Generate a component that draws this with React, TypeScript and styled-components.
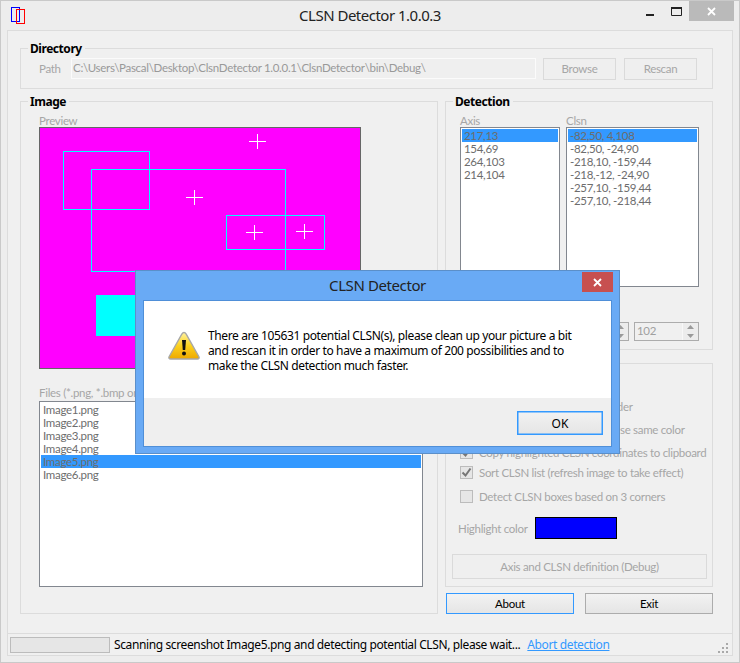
import React from "react"
import styled, { createGlobalStyle } from "styled-components"

const GlobalStyle = createGlobalStyle`
    html, body {
        margin: 0;
        padding: 0;
        background: #ededed;
    }
    * {
        box-sizing: border-box;
    }
`
const Window = styled.div`
    position: relative;
    width: 740px;
    height: 663px;
    background: #ededed;
    border: 1px solid #c9c9c9;
    font-family: "Lato", "Noto Sans", sans-serif;
    font-size: 11.5px;
    letter-spacing: -0.3px;
    overflow: hidden;
`
const TitleBar = styled.header`
    height: 29px;
    display: grid;
    grid-template-columns: 1fr auto 1fr;
`
const AppIcon = styled.svg`
    margin: 6px 0 0 10px;
`
const TitleText = styled.h1`
    margin: 0;
    font-family: "Noto Sans", sans-serif;
    font-size: 15px;
    font-weight: 400;
    line-height: 29px;
    color: #222;
    letter-spacing: -0.5px;
`
const WindowButtons = styled.div`
    display: flex;
    justify-content: flex-end;
    align-items: flex-start;
    padding-right: 5px;
`
const WindowButton = styled.div<{ $close?: boolean }>`
    width: ${p => (p.$close ? 45 : 26)}px;
    height: 20px;
    background: ${p => (p.$close ? "#bababa" : "transparent")};
    display: flex;
    align-items: center;
    justify-content: center;
`
const Client = styled.div`
    margin: 0 6px 0 6px;
    height: 626px;
    background: #f0f0f0;
    border: 1px solid #dcdcdc;
    display: flex;
    flex-direction: column;
`
const Content = styled.div`
    height: 602px;
    padding: 17px 19px 0 12px;
    display: flex;
    flex-direction: column;
    gap: 12px;
`
const Group = styled.section<{ $h: number }>`
    position: relative;
    height: ${p => p.$h}px;
    border: 1px solid #dcdcdc;
`
const Legend = styled.h2`
    position: absolute;
    top: -8px;
    left: 7px;
    margin: 0;
    padding: 0 3px 0 2px;
    background: #f0f0f0;
    color: #000;
    font-family: "Noto Sans", sans-serif;
    font-size: 12px;
    letter-spacing: -0.45px;
    line-height: 15px;
    font-weight: 700;
`
const DirectoryRow = styled.div`
    display: flex;
    align-items: center;
    height: 100%;
    padding: 0 0 0 18px;
`
const MutedLabel = styled.label`
    display: block;
    color: #a6a6a6;
    line-height: 13px;
    white-space: nowrap;
`
const PathLabel = styled(MutedLabel)`
    width: 32px;
`
const PathInput = styled.div`
    width: 465px;
    height: 21px;
    padding-left: 1px;
    line-height: 18px;
    color: #999;
    background: #efefef;
    border: 1px solid #fbfbfb;
    white-space: nowrap;
`
const FlatButton = styled.button<{ $ml?: number; $w: number; $h?: number }>`
    width: ${p => p.$w}px;
    height: ${p => p.$h ?? 22}px;
    margin-left: ${p => p.$ml ?? 0}px;
    padding: 0;
    color: #a6a6a6;
    background: #efefef;
    border: 1px solid #dadada;
    font: inherit;
    letter-spacing: inherit;
`
const Columns = styled.div`
    display: flex;
    gap: 7px;
`
const ImageColumn = styled.div`
    width: 418px;
`
const ImageBody = styled.div`
    padding: 12px 0 0 18px;
`
const PreviewBox = styled.div`
    position: relative;
    width: 322px;
    height: 242px;
    background: #ff00ff;
    border: 1px solid #666;
`
const FilesLabel = styled(MutedLabel)`
    margin: 17px 0 2px;
`
const ListBox = styled.ul<{ $w: number; $h: number }>`
    width: ${p => p.$w}px;
    height: ${p => p.$h}px;
    margin: 0;
    padding: 1px;
    list-style: none;
    background: #fff;
    border: 1px solid #82878f;
    overflow: hidden;
`
const ListItem = styled.li<{ $selected?: boolean }>`
    height: 13px;
    line-height: 13px;
    padding-left: 2px;
    color: #6d6d6d;
    background: ${p => (p.$selected ? "#3399ff" : "transparent")};
    white-space: nowrap;
`
const RightColumn = styled.div`
    width: 268px;
    display: flex;
    flex-direction: column;
`
const DetectionBody = styled.div`
    padding: 12px 0 0 14px;
`
const ListsRow = styled.div`
    display: flex;
    gap: 6px;
`
const SpinnerRow = styled.div`
    display: flex;
    justify-content: flex-end;
    gap: 5px;
    margin: 35px 13px 0 0;
`
const Spinner = styled.div`
    width: 65px;
    height: 19px;
    display: flex;
    justify-content: space-between;
    padding-left: 2px;
    line-height: 16px;
    color: #a0a0a0;
    border: 1px solid #acacac;
`
const SpinnerArrows = styled.div`
    width: 16px;
    display: flex;
    flex-direction: column;
    align-items: center;
    justify-content: space-around;
    background: #ececec;
    border-left: 1px solid #f8f8f8;
`
const OptionsGroup = styled(Group)`
    margin-top: 13px;
    padding: 35px 0 0 14px;
`
const CheckRow = styled.div<{ $gap: number }>`
    display: flex;
    align-items: center;
    gap: 6px;
    height: 14px;
    margin-bottom: ${p => p.$gap}px;
    color: #a6a6a6;
    white-space: nowrap;
`
const CheckBox = styled.span`
    width: 13px;
    height: 13px;
    display: flex;
    align-items: center;
    justify-content: center;
    background: #e6e6e6;
    border: 1px solid #bcbcbc;
`
const ColorRow = styled.div`
    display: flex;
    align-items: center;
    margin: 14px 0 0 -2px;
`
const ColorLabel = styled(MutedLabel)`
    width: 77px;
`
const ColorSwatch = styled.div`
    width: 82px;
    height: 22px;
    background: #0000ff;
    border: 1px solid #000;
`
const DebugButton = styled(FlatButton)`
    display: block;
    margin: 15px 0 0 -8px;
`
const ButtonRow = styled.div`
    display: flex;
    justify-content: space-between;
    margin-top: 6px;
    padding-left: 1px;
`
const PushButton = styled.button<{ $focused?: boolean }>`
    width: 128px;
    height: 21px;
    padding: 0;
    font: inherit;
    letter-spacing: inherit;
    color: #000;
    background: linear-gradient(#f2f2f2, #e5e5e5);
    border: 1px solid ${p => (p.$focused ? "#3399ff" : "#acacac")};
`
const StatusBar = styled.footer`
    height: 22px;
    margin-top: auto;
    padding: 0 3px 0 2px;
    display: flex;
    align-items: center;
    border-top: 1px solid #dcdcdc;
    font-family: "Noto Sans", sans-serif;
    font-size: 12px;
    letter-spacing: -0.38px;
`
const Progress = styled.div`
    width: 100px;
    height: 16px;
    background: #e6e6e6;
    border: 1px solid #bcbcbc;
`
const StatusText = styled.span`
    margin-left: 4px;
    color: #000;
    white-space: nowrap;
`
const AbortLink = styled.a`
    margin-left: 7px;
    color: #3399ff;
    text-decoration: underline;
    white-space: nowrap;
`
const Grip = styled.svg`
    margin: 7px 0 0 auto;
`

const Dialog = styled.div`
    position: absolute;
    left: 134px;
    top: 269px;
    width: 485px;
    height: 184px;
    padding: 0 7px 6px 7px;
    background: #69aaf5;
    border: 1px solid #5b8fc9;
    display: flex;
    flex-direction: column;
    font-family: "Noto Sans", sans-serif;
    font-size: 12px;
`
const DialogTitleBar = styled.div`
    position: relative;
    height: 29px;
    flex: none;
    text-align: center;
    line-height: 29px;
    font-size: 15px;
    letter-spacing: -0.4px;
    color: #222;
`
const DialogClose = styled.div`
    position: absolute;
    top: 1px;
    right: -1px;
    width: 31px;
    height: 20px;
    background: #c75050;
    display: flex;
    align-items: center;
    justify-content: center;
`
const DialogInner = styled.div`
    flex: 1;
    display: flex;
    flex-direction: column;
    background: #efefef;
    border: 1px solid #4f8fd8;
`
const DialogMessage = styled.div`
    height: 97px;
    flex: none;
    padding: 27px 0 0 24px;
    background: #fff;
    display: flex;
    gap: 8px;
`
const MessageText = styled.p`
    margin: 0;
    width: 385px;
    line-height: 15px;
    letter-spacing: -0.38px;
    color: #000;
`
const DialogFooter = styled.div`
    flex: 1;
    display: flex;
    align-items: flex-start;
    justify-content: flex-end;
    padding: 13px 8px 0 0;
`
const OkButton = styled.button`
    width: 86px;
    height: 24px;
    padding: 0;
    font: inherit;
    letter-spacing: 0;
    color: #000;
    background: linear-gradient(#f2f2f2, #e5e5e5);
    border: 1px solid #3399ff;
    box-shadow: inset 0 0 0 0.5px #3399ff;
`

const Cross = ({ x, y }: { x: number; y: number }) => (
    <path d={`M${x - 8} ${y}.5h17M${x}.5 ${y - 7}v15`} stroke="#fff" fill="none" />
)

const Rect = ({ x, y, w, h }: { x: number; y: number; w: number; h: number }) => (
    <rect x={x + 0.5} y={y + 0.5} width={w} height={h} stroke="#00ffff" fill="none" />
)

const PreviewDrawing = () => (
    <svg width="320" height="240" style={{ display: "block" }}>
        <rect x="56" y="167" width="39" height="41" fill="#00ffff" />
        <Rect x={23} y={23} w={86} h={58} />
        <Rect x={51} y={41} w={194} h={102} />
        <Rect x={186} y={87} w={98} h={34} />
        <Cross x={217} y={13} />
        <Cross x={154} y={69} />
        <Cross x={214} y={104} />
        <Cross x={264} y={103} />
    </svg>
)

const UpArrow = () => (
    <svg width="7" height="4"><path d="M3.5 0L7 4H0z" fill="#9a9a9a" /></svg>
)
const DownArrow = () => (
    <svg width="7" height="4"><path d="M0 0h7L3.5 4z" fill="#9a9a9a" /></svg>
)
const Check = () => (
    <svg width="11" height="11" viewBox="0 0 11 11">
        <path d="M1.5 5.5l3 3 5-7" stroke="#777" strokeWidth="2" fill="none" />
    </svg>
)
const CloseMark = () => (
    <svg width="9" height="9" viewBox="0 0 9 9">
        <path d="M1 1l7 7M8 1l-7 7" stroke="#fff" strokeWidth="1.8" fill="none" />
    </svg>
)

const WarningIcon = () => (
    <svg width="32" height="29" viewBox="0 0 32 29" style={{ flex: "none", marginTop: 3 }}>
        <defs>
            <linearGradient id="warn" x1="0" y1="0" x2="0" y2="1">
                <stop offset="0" stopColor="#fff2a0" />
                <stop offset="0.5" stopColor="#fcd21e" />
                <stop offset="1" stopColor="#eda800" />
            </linearGradient>
        </defs>
        <path d="M16 1.5c1 0 1.6.6 2.2 1.6l12.6 22.4c.8 1.5 0 2.5-1.4 2.5H2.6c-1.4 0-2.2-1-1.4-2.5L13.8 3.100c.6-1 1.200-1.600 2.200-1.600z" fill="url(#warn)" stroke="#a8a8a8" strokeWidth="1.400" />
        <path d="M14 9h4l-.8 10h-2.400z" fill="#111" />
        <circle cx="16" cy="22.500" r="2" fill="#111" />
    </svg>
)

const axisValues = ["217,13", "154,69", "264,103", "214,104"]
const clsnValues = [
    "-82,50, 4,108",
    "-82,50, -24,90",
    "-218,10, -159,44",
    "-218,-12, -24,90",
    "-257,10, -159,44",
    "-257,10, -218,44",
]
const files = ["Image1.png", "Image2.png", "Image3.png", "Image4.png", "Image5.png", "Image6.png"]

export default function App() {
    return (
        <Window>
            <GlobalStyle />
            <TitleBar>
                <AppIcon width="16" height="18" viewBox="0 0 16 18">
                    <rect x="0.5" y="0.5" width="8" height="14" fill="none" stroke="#0000ff" />
                    <rect x="5.500" y="2.500" width="8" height="14" fill="none" stroke="#ff0000" />
                </AppIcon>
                <TitleText>CLSN Detector 1.0.0.3</TitleText>
                <WindowButtons>
                    <WindowButton>
                        <svg width="8" height="3" style={{ marginTop: 8 }}><rect width="8" height="2" fill="#222" /></svg>
                    </WindowButton>
                    <WindowButton>
                        <svg width="11" height="9"><path d="M.5 1.500h10v7H.5z" fill="none" stroke="#222" /><rect width="11" height="2" fill="#222" /></svg>
                    </WindowButton>
                    <WindowButton $close>
                        <CloseMark />
                    </WindowButton>
                </WindowButtons>
            </TitleBar>
            <Client>
                <Content>
                    <Group $h={41}>
                        <Legend>Directory</Legend>
                        <DirectoryRow>
                            <PathLabel>Path</PathLabel>
                            <PathInput>C:\Users\Pascal\Desktop\ClsnDetector 1.0.0.1\ClsnDetector\bin\Debug\</PathInput>
                            <FlatButton $w={73} $ml={7}>Browse</FlatButton>
                            <FlatButton $w={73} $ml={8}>Rescan</FlatButton>
                        </DirectoryRow>
                    </Group>
                    <Columns>
                        <ImageColumn>
                            <Group $h={513}>
                                <Legend>Image</Legend>
                                <ImageBody>
                                    <MutedLabel>Preview</MutedLabel>
                                    <PreviewBox>
                                        <PreviewDrawing />
                                    </PreviewBox>
                                    <FilesLabel>Files (*.png, *.bmp or *.gif)</FilesLabel>
                                    <ListBox $w={384} $h={186}>
                                        {files.map(f => (
                                            <ListItem key={f} $selected={f === "Image5.png"}>{f}</ListItem>
                                        ))}
                                    </ListBox>
                                </ImageBody>
                            </Group>
                        </ImageColumn>
                        <RightColumn>
                            <Group $h={249}>
                                <Legend>Detection</Legend>
                                <DetectionBody>
                                    <ListsRow>
                                        <div>
                                            <MutedLabel>Axis</MutedLabel>
                                            <ListBox $w={100} $h={160}>
                                                {axisValues.map((v, i) => (
                                                    <ListItem key={v} $selected={i === 0}>{v}</ListItem>
                                                ))}
                                            </ListBox>
                                        </div>
                                        <div>
                                            <MutedLabel>Clsn</MutedLabel>
                                            <ListBox $w={133} $h={160}>
                                                {clsnValues.map((v, i) => (
                                                    <ListItem key={v} $selected={i === 0}>{v}</ListItem>
                                                ))}
                                            </ListBox>
                                        </div>
                                    </ListsRow>
                                    <SpinnerRow>
                                        <Spinner>
                                            <span>102</span>
                                            <SpinnerArrows><UpArrow /><DownArrow /></SpinnerArrows>
                                        </Spinner>
                                        <Spinner>
                                            <span>102</span>
                                            <SpinnerArrows><UpArrow /><DownArrow /></SpinnerArrows>
                                        </Spinner>
                                    </SpinnerRow>
                                </DetectionBody>
                            </Group>
                            <OptionsGroup $h={224}>
                                <Legend>Options</Legend>
                                <CheckRow $gap={9}>
                                    <CheckBox><Check /></CheckBox>
                                    <span>Display axis on the upper border</span>
                                </CheckRow>
                                <CheckRow $gap={9}>
                                    <CheckBox><Check /></CheckBox>
                                    <span>Draw all of the CLSN boxes, use same color</span>
                                </CheckRow>
                                <CheckRow $gap={6}>
                                    <CheckBox><Check /></CheckBox>
                                    <span>Copy highlighted CLSN coordinates to clipboard</span>
                                </CheckRow>
                                <CheckRow $gap={10}>
                                    <CheckBox><Check /></CheckBox>
                                    <span>Sort CLSN list (refresh image to take effect)</span>
                                </CheckRow>
                                <CheckRow $gap={0}>
                                    <CheckBox />
                                    <span>Detect CLSN boxes based on 3 corners</span>
                                </CheckRow>
                                <ColorRow>
                                    <ColorLabel>Highlight color</ColorLabel>
                                    <ColorSwatch />
                                </ColorRow>
                                <DebugButton $w={255} $h={25}>Axis and CLSN definition (Debug)</DebugButton>
                            </OptionsGroup>
                            <ButtonRow>
                                <PushButton $focused>About</PushButton>
                                <PushButton>Exit</PushButton>
                            </ButtonRow>
                        </RightColumn>
                    </Columns>
                </Content>
                <StatusBar>
                    <Progress />
                    <StatusText>Scanning screenshot Image5.png and detecting potential CLSN, please wait...</StatusText>
                    <AbortLink>Abort detection</AbortLink>
                    <Grip width="11" height="11" viewBox="0 0 11 11">
                        <path d="M8 0h2v2H8zM4 4h2v2H4zM8 4h2v2H8zM0 8h2v2H0zM4 8h2v2H4zM8 8h2v2H8z" fill="#a9a9a9" />
                    </Grip>
                </StatusBar>
            </Client>
            <Dialog>
                <DialogTitleBar>
                    CLSN Detector
                    <DialogClose><CloseMark /></DialogClose>
                </DialogTitleBar>
                <DialogInner>
                    <DialogMessage>
                        <WarningIcon />
                        <MessageText>
                            There are 105631 potential CLSN(s), please clean up your picture a bit and rescan it in order to have a maximum of 200 possibilities and to make the CLSN detection much faster.
                        </MessageText>
                    </DialogMessage>
                    <DialogFooter>
                        <OkButton>OK</OkButton>
                    </DialogFooter>
                </DialogInner>
            </Dialog>
        </Window>
    )
}
